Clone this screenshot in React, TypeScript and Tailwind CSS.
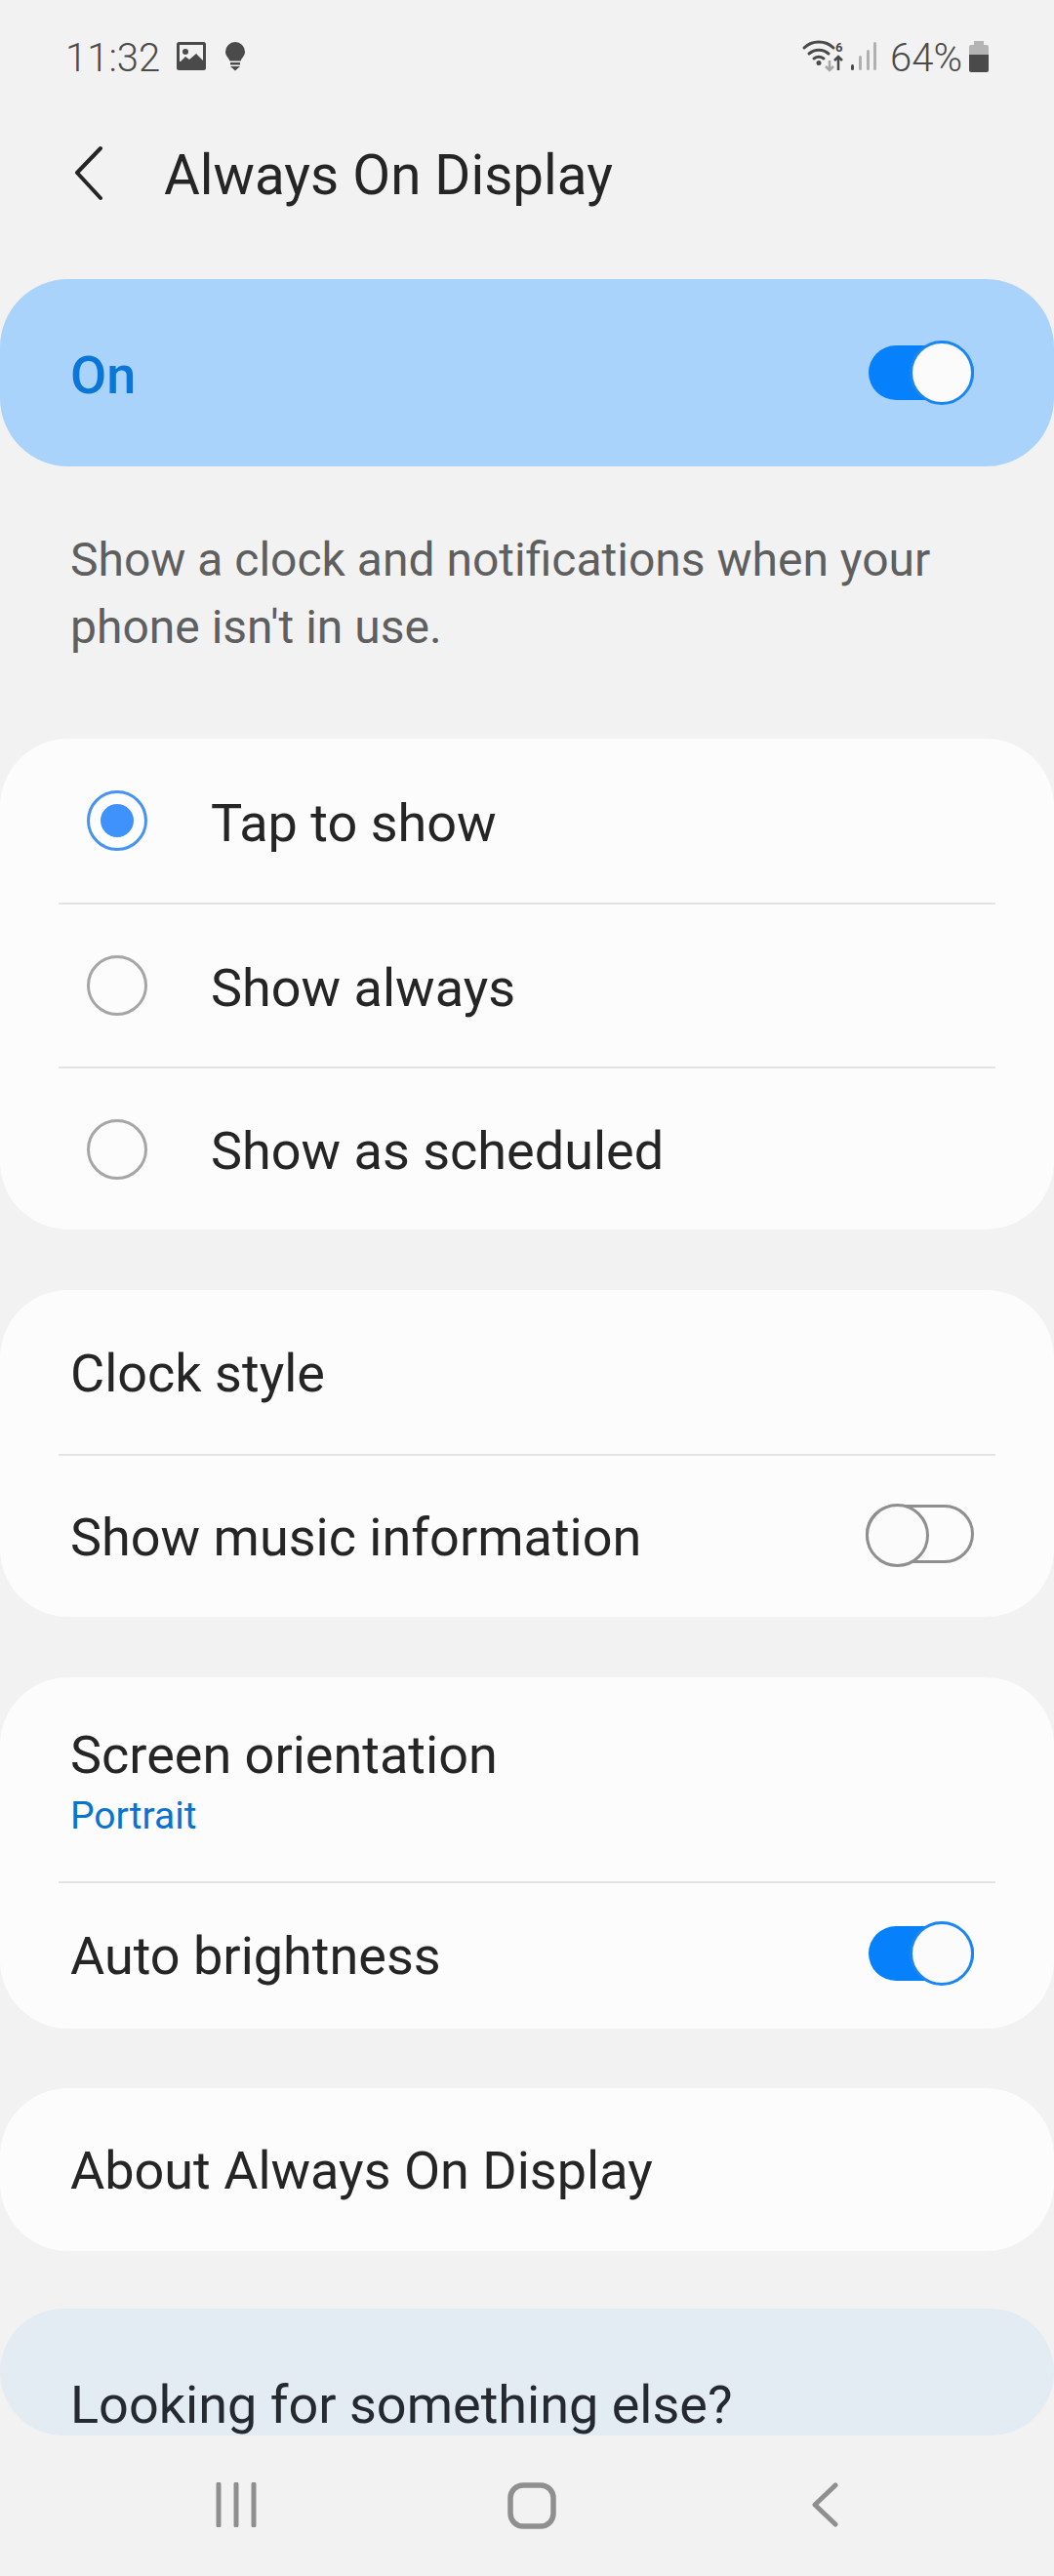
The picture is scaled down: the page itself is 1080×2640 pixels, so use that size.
const font = { fontFamily: 'Roboto, sans-serif' };

function Toggle({ on }: { on: boolean }) {
  if (on) {
    return (
      <div className="relative w-[108px] h-[56px] rounded-full bg-[#0780fb]">
        <div className="absolute right-0 top-[-5px] w-[66px] h-[66px] rounded-full bg-[#fbfbfb] border-[3px] border-[#1a86f5]" />
      </div>
    );
  }
  return (
    <div className="relative w-[111px] h-[60px] rounded-full border-[3px] border-[#8f8f8f]">
      <div className="absolute left-[-3px] top-[-4px] w-[65px] h-[65px] rounded-full bg-[#fbfbfb] border-[3px] border-[#8f8f8f]" />
    </div>
  );
}

function Radio({ checked }: { checked?: boolean }) {
  return (
    <div
      className={
        checked
          ? 'w-[62px] h-[62px] rounded-full border-[3px] border-[#4793f0] flex items-center justify-center'
          : 'w-[62px] h-[62px] rounded-full border-[3px] border-[#a6a6a6]'
      }
    >
      {checked && <div className="w-[34px] h-[34px] rounded-full bg-[#3f91fb]" />}
    </div>
  );
}

function Divider() {
  return <div className="mx-[60px] h-[2px] bg-[#e3e3e3]" />;
}

function RadioRow({ label, checked, h }: { label: string; checked?: boolean; h: string }) {
  return (
    <div className={`flex items-center pl-[89px] ${h}`}>
      <Radio checked={checked} />
      <span className="ml-[65px] pt-[4px] text-[54px] text-[#252525]">{label}</span>
    </div>
  );
}

function StatusBar() {
  return (
    <div className="h-[116px] flex justify-between pl-[67px] pr-[67px] pt-[36px] text-[#4a4a4a]">
      <div className="flex items-start">
        <span className="text-[40px] leading-[47px] font-light">11:32</span>
        <svg width="30" height="30" viewBox="0 0 30 30" className="ml-[17px] mt-[7px]">
          <rect x="0" y="0" width="30" height="29" rx="2.5" fill="#4a4a4a" />
          <rect x="3" y="3" width="24" height="17" fill="#f2f2f2" />
          <circle cx="9" cy="10" r="3" fill="#4a4a4a" />
          <path d="M3 21l6-6 4 3 7-6 7 7v8H3z" fill="#4a4a4a" />
        </svg>
        <svg width="22" height="30" viewBox="0 0 22 30" className="ml-[19px] mt-[7px]">
          <path d="M11 0a10 10 0 0 1 10 10c0 4-3 6-4.500 9.500h-11C4 16 1 14 1 10A10 10 0 0 1 11 0z" fill="#4a4a4a" />
          <rect x="6" y="21" width="10" height="2.500" fill="#4a4a4a" />
          <path d="M6 25h10l-5 4.500z" fill="#4a4a4a" />
        </svg>
      </div>
      <div className="flex items-start">
        <svg width="80" height="40" viewBox="0 0 80 40" className="mt-[4px]">
          <path d="M5 9C13 1 27 1 35 9M10 15c6-5 14-5 20 0M15 20c3-2 7-2 10 0" fill="none" stroke="#4a4a4a" strokeWidth="3" strokeLinecap="round" />
          <circle cx="20" cy="24.500" r="2.500" fill="#4a4a4a" />
          <path d="M31 22v10M27 28l4 4 4-4" fill="none" stroke="#a8a8a8" strokeWidth="2.500" />
          <path d="M40 32V18M36 22l4-4 4 4" fill="none" stroke="#4a4a4a" strokeWidth="2.500" />
          <text x="37" y="13" fontSize="13" fontWeight="700" fill="#4a4a4a" fontFamily="Roboto, sans-serif">6</text>
          <rect x="53" y="26" width="3" height="6" rx="1.500" fill="#4a4a4a" />
          <rect x="61" y="17" width="3" height="15" rx="1.500" fill="#b0b0b0" />
          <rect x="69" y="11" width="3" height="21" rx="1.500" fill="#b0b0b0" />
          <rect x="76" y="3" width="3" height="29" rx="1.500" fill="#b0b0b0" />
        </svg>
        <span className="ml-[13px] text-[40px] leading-[47px] font-light">64%</span>
        <svg width="20" height="32" viewBox="0 0 20 32" className="ml-[7px] mt-[6px]">
          <path d="M5 0h10v4h3a2 2 0 0 1 2 2v10H0V6a2 2 0 0 1 2-2h3z" fill="#b4b4b4" />
          <path d="M0 14h20v16a2 2 0 0 1-2 2H2a2 2 0 0 1-2-2z" fill="#4a4a4a" />
        </svg>
      </div>
    </div>
  );
}

function NavBar() {
  return (
    <div className="flex-1 flex items-start pl-[221px] pt-[48px]">
      <svg width="42" height="46" viewBox="0 0 42 46">
        <path d="M3 2v42M21 2v42M39 2v42" stroke="#8f8f8f" strokeWidth="5" strokeLinecap="round" />
      </svg>
      <svg width="50" height="48" viewBox="0 0 50 48" className="ml-[257px]">
        <rect x="3" y="3" width="44" height="42" rx="13" fill="none" stroke="#8f8f8f" strokeWidth="5.500" />
      </svg>
      <svg width="28" height="46" viewBox="0 0 28 46" className="ml-[261px]">
        <path d="M25 3L4 23l21 20" fill="none" stroke="#8f8f8f" strokeWidth="5" strokeLinecap="round" strokeLinejoin="round" />
      </svg>
    </div>
  );
}

export default function App() {
  return (
    <div className="w-[1080px] h-[2640px] bg-[#f2f2f2] flex flex-col overflow-hidden" style={font}>
      <StatusBar />

      <div className="h-[170px] flex items-center pl-[75px] pb-[42px]">
        <svg width="30" height="58" viewBox="0 0 30 58" className="mb-[5px]">
          <path d="M28 3L4 28l24 26" fill="none" stroke="#252525" strokeWidth="4" strokeLinecap="round" strokeLinejoin="round" />
        </svg>
        <span className="ml-[63px] text-[56.5px] text-[#252525]">Always On Display</span>
      </div>

      <div className="h-[192px] rounded-[70px] bg-[#aad3fc] flex items-center justify-between pl-[72px] pr-[82px]">
        <span className="pt-[5px] text-[54px] font-medium text-[#0a76d8]">On</span>
        <Toggle on />
      </div>

      <p className="h-[279px] pl-[72px] pr-[60px] pt-[61px] text-[48px] leading-[69px] text-[#5f5f5f]">
        Show a clock and notifications when your phone isn't in use.
      </p>

      <div className="h-[503px] rounded-[70px] bg-[#fcfcfc]">
        <RadioRow label="Tap to show" checked h="h-[168px]" />
        <Divider />
        <RadioRow label="Show always" h="h-[166px]" />
        <Divider />
        <RadioRow label="Show as scheduled" h="h-[165px]" />
      </div>

      <div className="mt-[62px] h-[335px] rounded-[70px] bg-[#fcfcfc]">
        <div className="h-[168px] flex items-center pl-[72px] pt-[3px] text-[54px] text-[#252525]">Clock style</div>
        <Divider />
        <div className="h-[165px] flex items-center justify-between pl-[72px] pr-[82px] text-[54px] text-[#252525]">
          <span className="pt-[2px]">Show music information</span>
          <div className="mb-[5px]">
            <Toggle on={false} />
          </div>
        </div>
      </div>

      <div className="mt-[62px] h-[360px] rounded-[70px] bg-[#fcfcfc]">
        <div className="h-[209px] pl-[72px] pt-[49px]">
          <div className="text-[54px] leading-[62px] text-[#252525]">Screen orientation</div>
          <div className="mt-[6px] text-[39px] leading-[50px] text-[#0a72d0]">Portrait</div>
        </div>
        <Divider />
        <div className="h-[149px] flex items-center justify-between pl-[72px] pr-[82px] text-[54px] text-[#252525]">
          <span>Auto brightness</span>
          <div className="mb-[5px]">
            <Toggle on />
          </div>
        </div>
      </div>

      <div className="mt-[61px] h-[167px] rounded-[70px] bg-[#fcfcfc] flex items-center pl-[72px] pt-[2px] text-[54px] text-[#252525]">
        About Always On Display
      </div>

      <div className="mt-[59px] h-[130px] rounded-[70px] bg-[#e3ebf3] pl-[72px] pt-[68px] overflow-hidden">
        <div className="text-[54px] leading-[62px] text-[#252a30]">Looking for something else?</div>
      </div>

      <NavBar />
    </div>
  );
}
